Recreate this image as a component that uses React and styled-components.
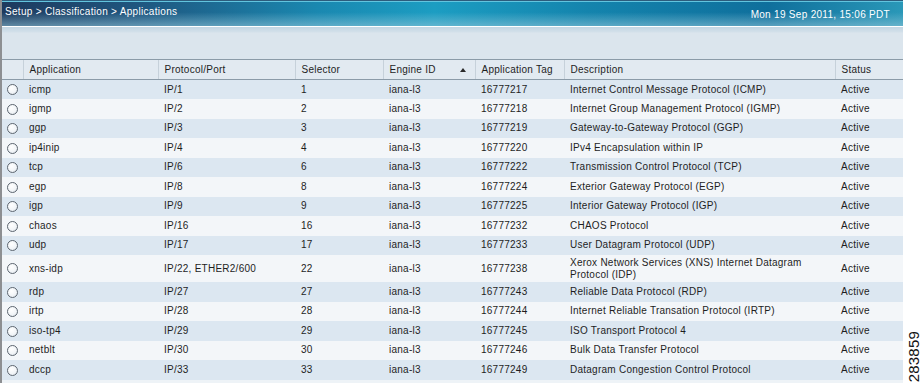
import React from "react"
import styled, { createGlobalStyle } from "styled-components"

const GlobalStyle = createGlobalStyle`
  html, body {
    margin: 0;
    padding: 0;
    background: #ffffff;
  }
  body {
    font-family: "Liberation Sans", Arial, sans-serif;
  }
`

const columns = [
  { key: "radio", label: "", width: 21 },
  { key: "app", label: "Application", width: 135 },
  { key: "port", label: "Protocol/Port", width: 137 },
  { key: "sel", label: "Selector", width: 88 },
  { key: "engine", label: "Engine ID", width: 92, sorted: true },
  { key: "tag", label: "Application Tag", width: 89 },
  { key: "desc", label: "Description", width: 271 },
  { key: "status", label: "Status", width: 68 },
]

const rows = [
  ["icmp", "IP/1", "1", "16777217", "Internet Control Message Protocol (ICMP)"],
  ["igmp", "IP/2", "2", "16777218", "Internet Group Management Protocol (IGMP)"],
  ["ggp", "IP/3", "3", "16777219", "Gateway-to-Gateway Protocol (GGP)"],
  ["ip4inip", "IP/4", "4", "16777220", "IPv4 Encapsulation within IP"],
  ["tcp", "IP/6", "6", "16777222", "Transmission Control Protocol (TCP)"],
  ["egp", "IP/8", "8", "16777224", "Exterior Gateway Protocol (EGP)"],
  ["igp", "IP/9", "9", "16777225", "Interior Gateway Protocol (IGP)"],
  ["chaos", "IP/16", "16", "16777232", "CHAOS Protocol"],
  ["udp", "IP/17", "17", "16777233", "User Datagram Protocol (UDP)"],
  ["xns-idp", "IP/22, ETHER2/600", "22", "16777238", ["Xerox Network Services (XNS) Internet Datagram", "Protocol (IDP)"]],
  ["rdp", "IP/27", "27", "16777243", "Reliable Data Protocol (RDP)"],
  ["irtp", "IP/28", "28", "16777244", "Internet Reliable Transation Protocol (IRTP)"],
  ["iso-tp4", "IP/29", "29", "16777245", "ISO Transport Protocol 4"],
  ["netblt", "IP/30", "30", "16777246", "Bulk Data Transfer Protocol"],
  ["dccp", "IP/33", "33", "16777249", "Datagram Congestion Control Protocol"],
]

export default function App() {
  return (
    <>
      <GlobalStyle />
      <Page>
        <Panel>
          <TitleBar>
            <Crumbs>Setup &gt; Classification &gt; Applications</Crumbs>
            <Stamp>Mon 19 Sep 2011, 15:06 PDT</Stamp>
          </TitleBar>
          <Toolbar />
          <Table>
            <colgroup>
              {columns.map((c) => (
                <col key={c.key} style={{ width: c.width }} />
              ))}
            </colgroup>
            <thead>
              <tr>
                {columns.map((c) => (
                  <HeadCell key={c.key}>
                    {c.sorted ? (
                      <SortWrap>
                        {c.label}
                        <SortArrow />
                      </SortWrap>
                    ) : (
                      c.label
                    )}
                  </HeadCell>
                ))}
              </tr>
            </thead>
            <tbody>
              {rows.map(([app, port, sel, tag, desc]) => (
                <Row key={app} $tall={Array.isArray(desc)}>
                  <RadioCell>
                    <Radio />
                  </RadioCell>
                  <Cell>{app}</Cell>
                  <Cell>{port}</Cell>
                  <Cell>{sel}</Cell>
                  <Cell>iana-l3</Cell>
                  <Cell>{tag}</Cell>
                  <Cell>
                    {Array.isArray(desc) ? (
                      <>
                        {desc[0]}
                        <br />
                        {desc[1]}
                      </>
                    ) : (
                      desc
                    )}
                  </Cell>
                  <Cell>Active</Cell>
                </Row>
              ))}
            </tbody>
          </Table>
        </Panel>
        <Side>
          <FigureId>283859</FigureId>
        </Side>
      </Page>
    </>
  )
}

const Page = styled.div`
  width: 923px;
  height: 383px;
  display: flex;
  overflow: hidden;
  background: #ffffff;
`
const Panel = styled.div`
  width: 901px;
  flex: none;
  border-left: 2px solid #8d8f92;
  display: flex;
  flex-direction: column;
  background: #eef3f7;
`
const TitleBar = styled.div`
  height: 25px;
  flex: none;
  display: flex;
  align-items: center;
  justify-content: space-between;
  padding: 0 13px 0 3px;
  color: #ffffff;
  font-size: 10px;
  letter-spacing: 0.3px;
  border-top: 1px solid #2d5c7c;
  box-shadow: inset 0 1px 0 #62c4de;
  background:
    linear-gradient(180deg, rgba(255, 255, 255, 0) 45%, rgba(150, 200, 218, 0.55) 100%),
    linear-gradient(90deg, #1d3a5e 0%, #1f567f 15%, #1a88b0 35%, #1c9dc2 48%, #1484ad 65%, #0f6f9c 85%, #2a98b8 100%);
`
const Crumbs = styled.span`
  margin-top: -4px;
`
const Stamp = styled.span`
  margin-top: 2px;
`
const Toolbar = styled.div`
  height: 32px;
  flex: none;
  border-top: 1px solid #ffffff;
  background: linear-gradient(180deg, #c2d6e3 0px, #d3e0ea 5px, #dbe5ed 6px, #dbe5ed 100%);
`
const Table = styled.table`
  width: 901px;
  table-layout: fixed;
  border-collapse: collapse;
  font-size: 10px;
  letter-spacing: 0.25px;
  color: #1e1e1e;
`
const HeadCell = styled.th`
  height: 19px;
  padding: 0 0 0 6px;
  text-align: left;
  font-weight: normal;
  background: #e2eaf1;
  border-top: 1px solid #8b9ba8;
  border-bottom: 1px solid #8b9ba8;
  border-left: 1px solid #c6d1da;
  &:first-child {
    border-left: none;
  }
`
const SortWrap = styled.div`
  display: flex;
  align-items: center;
  justify-content: space-between;
  padding-right: 9px;
`
const SortArrow = styled.span`
  width: 0;
  height: 0;
  border-left: 3px solid transparent;
  border-right: 3px solid transparent;
  border-bottom: 4px solid #2a2a2a;
`
const Row = styled.tr`
  height: ${(p) => (p.$tall ? "27px" : "19.5px")};
  background: #f3f6f9;
  &:nth-child(odd) {
    background: #dce7f1;
  }
`
const Cell = styled.td`
  padding: 0 0 0 6px;
  line-height: 12px;
  vertical-align: middle;
  white-space: nowrap;
`
const RadioCell = styled.td`
  padding: 0;
  text-align: center;
  vertical-align: middle;
`
const Radio = styled.span`
  display: inline-block;
  vertical-align: middle;
  width: 9px;
  height: 9px;
  border-radius: 50%;
  border: 1px solid #5d6670;
  background: radial-gradient(circle at 40% 35%, #ffffff 0%, #f2f5f8 55%, #d5dde4 100%);
`
const Side = styled.div`
  flex: 1;
  display: flex;
  align-items: flex-end;
  justify-content: center;
  padding-bottom: 1px;
`
const FigureId = styled.span`
  writing-mode: vertical-rl;
  transform: rotate(180deg);
  font-size: 15px;
  line-height: 15px;
  color: #111111;
  letter-spacing: 0.2px;
`
